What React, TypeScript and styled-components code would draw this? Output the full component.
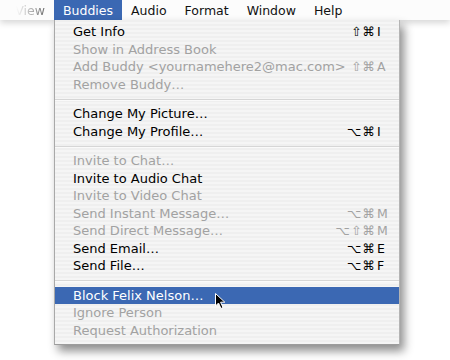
import React from 'react';
import styled, { createGlobalStyle } from 'styled-components';

const GlobalStyle = createGlobalStyle`
  html, body {
    margin: 0;
    padding: 0;
    background: #ffffff;
  }
  body {
    font-family: "DejaVu Sans", "Liberation Sans", sans-serif;
  }
`;

const Screen = styled.div`
  position: relative;
  width: 450px;
  height: 360px;
  overflow: hidden;
  background: #ffffff;
`;

const MenuBar = styled.div`
  display: flex;
  align-items: stretch;
  height: 20px;
  background: #fcfcfc;
  box-shadow: 0 3px 6px rgba(0, 0, 0, 0.16);
`;

const BarItem = styled.div<{ $active?: boolean }>`
  display: flex;
  align-items: center;
  padding: 0 9px;
  font-size: 12.5px;
  color: ${(p) => (p.$active ? '#ffffff' : '#111111')};
  background: ${(p) => (p.$active ? '#3b68b3' : 'transparent')};
`;

const FadedItem = styled(BarItem)`
  width: 54px;
  box-sizing: border-box;
  justify-content: flex-end;
  color: #6a6a6a;
  -webkit-mask-image: linear-gradient(to right, transparent 30%, #000 85%);
  mask-image: linear-gradient(to right, transparent 30%, #000 85%);
`;

const Dropdown = styled.div`
  position: absolute;
  left: 54px;
  top: 20px;
  width: 346px;
  box-sizing: border-box;
  padding: 3px 0 4.5px;
  border-left: 1px solid #a9a9a9;
  border-right: 1px solid #b4b4b4;
  border-bottom: 1px solid #9c9c9c;
  background: repeating-linear-gradient(
    to bottom,
    #efefef 0px,
    #efefef 2px,
    #f5f5f5 2px,
    #f5f5f5 4px
  );
  box-shadow: 4px 6px 9px rgba(0, 0, 0, 0.45);
`;

const Row = styled.div<{ $disabled?: boolean; $selected?: boolean }>`
  display: flex;
  align-items: center;
  height: 17.5px;
  padding: 0 5px 0 18px;
  font-size: 13px;
  white-space: nowrap;
  color: ${(p) => (p.$selected ? '#ffffff' : p.$disabled ? '#a2a2a2' : '#000000')};
  background: ${(p) => (p.$selected ? '#3b68b3' : 'transparent')};
`;

const Label = styled.span`
  flex: 1;
`;

const Keys = styled.span`
  display: flex;
  font-size: 12.5px;
`;

const Mods = styled.span`
  text-align: right;
  letter-spacing: 1px;
`;

const KeyLetter = styled.span`
  width: 18px;
  padding-left: 1px;
  box-sizing: border-box;
`;

const Separator = styled.div`
  height: 12px;
  display: flex;
  align-items: center;

  &::after {
    content: '';
    flex: 1;
    height: 1px;
    background: #d6d6d6;
    box-shadow: 0 1px 0 #fafafa;
  }
`;

const Cursor = styled.svg`
  position: absolute;
  left: 214px;
  top: 292px;
`;

type Item = {
  label: string;
  disabled?: boolean;
  selected?: boolean;
  mods?: string;
  key?: string;
};

const groups: Item[][] = [
  [
    { label: 'Get Info', mods: '⇧⌘', key: 'I' },
    { label: 'Show in Address Book', disabled: true },
    { label: 'Add Buddy <yournamehere2@mac.com>', disabled: true, mods: '⇧⌘', key: 'A' },
    { label: 'Remove Buddy…', disabled: true },
  ],
  [
    { label: 'Change My Picture…' },
    { label: 'Change My Profile…', mods: '⌥⌘', key: 'I' },
  ],
  [
    { label: 'Invite to Chat…', disabled: true },
    { label: 'Invite to Audio Chat' },
    { label: 'Invite to Video Chat', disabled: true },
    { label: 'Send Instant Message…', disabled: true, mods: '⌥⌘', key: 'M' },
    { label: 'Send Direct Message…', disabled: true, mods: '⌥⇧⌘', key: 'M' },
    { label: 'Send Email…', mods: '⌥⌘', key: 'E' },
    { label: 'Send File…', mods: '⌥⌘', key: 'F' },
  ],
  [
    { label: 'Block Felix Nelson…', selected: true },
    { label: 'Ignore Person', disabled: true },
    { label: 'Request Authorization', disabled: true },
  ],
];

export default function App() {
  return (
    <Screen>
      <GlobalStyle />
      <MenuBar>
        <FadedItem>View</FadedItem>
        <BarItem $active>Buddies</BarItem>
        <BarItem>Audio</BarItem>
        <BarItem>Format</BarItem>
        <BarItem>Window</BarItem>
        <BarItem>Help</BarItem>
      </MenuBar>
      <Dropdown>
        {groups.map((group, gi) => (
          <React.Fragment key={gi}>
            {gi > 0 && <Separator />}
            {group.map((item) => (
              <Row key={item.label} $disabled={item.disabled} $selected={item.selected}>
                <Label>{item.label}</Label>
                {item.key && (
                  <Keys>
                    <Mods>{item.mods}</Mods>
                    <KeyLetter>{item.key}</KeyLetter>
                  </Keys>
                )}
              </Row>
            ))}
          </React.Fragment>
        ))}
      </Dropdown>
      <Cursor width="14" height="18" viewBox="0 0 14 18">
        <path
          d="M1.5 1.5 L1.5 14 L4.5 11 L7 16.5 L9 15.5 L6.6 10.2 L10.8 10.2 Z"
          fill="#000"
          stroke="#fff"
          strokeWidth="1"
          strokeLinejoin="round"
        />
      </Cursor>
    </Screen>
  );
}
